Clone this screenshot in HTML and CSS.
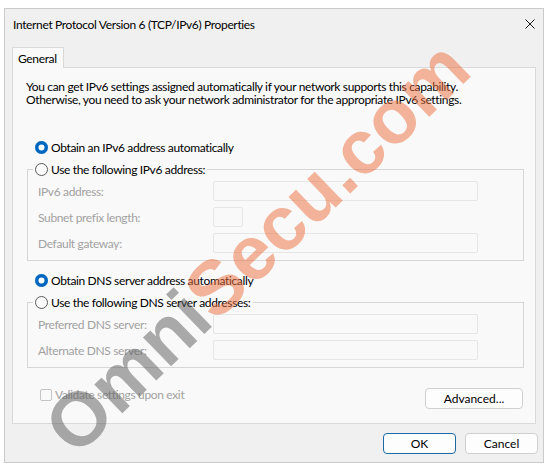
FILE: index.html
```html
<!DOCTYPE html>
<html lang="en">
<head>
  <meta charset="UTF-8"/>
  <title>Internet Protocol Version 6 (TCP/IPv6) Properties</title>
  <link rel="stylesheet" href="styles.css">
</head>
<body>
  <div class="dialog">
    <div class="titlebar">
      <span class="title">Internet Protocol Version 6 (TCP/IPv6) Properties</span>
      <button class="close" aria-label="Close">
        <svg width="10" height="10" viewBox="0 0 10 10"><path d="M0.5 0.5L9.5 9.5M9.5 0.5L0.5 9.5" stroke="#1a1a1a" stroke-width="1"/></svg>
      </button>
    </div>
    <div class="tabs"><span class="tab">General</span></div>

    <div class="panel">
      <p class="intro">You can get IPv6 settings assigned automatically if your network supports this capability.<br>Otherwise, you need to ask your network administrator for the appropriate IPv6 settings.</p>

      <!-- IPv6 address -->
      <label class="radio top"><input type="radio" name="ip" checked>Obtain an IPv6 address automatically</label>
      <fieldset class="group">
        <legend><label class="radio"><input type="radio" name="ip">Use the following IPv6 address:</label></legend>
        <div class="fields">
          <span>IPv6 address:</span><input class="wide" disabled>
          <span>Subnet prefix length:</span><input class="short" disabled>
          <span>Default gateway:</span><input class="wide" disabled>
        </div>
      </fieldset>

      <!-- DNS -->
      <label class="radio top dns"><input type="radio" name="dns" checked>Obtain DNS server address automatically</label>
      <fieldset class="group">
        <legend><label class="radio"><input type="radio" name="dns">Use the following DNS server addresses:</label></legend>
        <div class="fields">
          <span>Preferred DNS server:</span><input class="wide" disabled>
          <span>Alternate DNS server:</span><input class="wide" disabled>
        </div>
      </fieldset>

      <div class="footer">
        <label class="check"><input type="checkbox" disabled>Validate settings upon exit</label>
        <button class="btn adv">Advanced...</button>
      </div>
    </div>

    <div class="actions">
      <button class="btn ok">OK</button>
      <button class="btn">Cancel</button>
    </div>
  </div>

  <svg class="watermark" width="550" height="469" viewBox="0 0 550 469">
    <text x="76" y="458" transform="rotate(-44 76 458)"><tspan class="wm-grey">Omni</tspan><tspan class="wm-orange">Secu.com</tspan></text>
  </svg>
</body>
</html>
```
FILE: styles.css
```css
body{margin:0;background:#fff;font:12px "Segoe UI",Lato,sans-serif;letter-spacing:-0.35px;color:#000;}

.dialog{
  margin:8px 0 0 4px;width:538px;height:453px;
  border:1px solid #cbcbcb;background:#f0f0f0;
  display:flex;flex-direction:column;
}
.titlebar{height:30px;display:flex;align-items:center;justify-content:space-between;padding:0 8px 0 8px;}
.close{border:none;background:none;padding:0;width:10px;height:10px;display:flex;}

.tabs{padding:8px 0 0 7px;display:flex;}
.tab{
  box-sizing:border-box;width:52px;height:21px;padding:0 5px;
  display:flex;align-items:center;
  border:1px solid #d9d9d9;border-bottom:none;background:#f9f9f9;
  margin-bottom:-1px;position:relative;z-index:1;
}

.panel{
  box-sizing:border-box;height:357px;margin:0 7px;
  border:1px solid #d9d9d9;background:#f9f9f9;
  padding:12px 0 0 13px;
}
.intro{margin:0 0 30px;line-height:13px;white-space:nowrap;}

.radio{display:flex;align-items:center;height:22px;gap:3px;white-space:nowrap;}
.radio.top{margin-left:9px;}
.radio.dns{margin-top:8px;}
.radio input{
  appearance:none;margin:0;width:13px;height:13px;border-radius:50%;
  box-sizing:border-box;border:1px solid #5a5a5a;background:#fbfbfb;
}
.radio input:checked{border:none;background:#0067c0;box-shadow:inset 0 0 0 3.5px #0067c0,inset 0 0 0 7px #fff;}

.group{margin:0 11px 0 1px;padding:1px 0 7px 5px;border:1px solid #d6d6d6;min-width:0;}
.group legend{padding:0 2px;}
.fields{
  display:grid;grid-template-columns:175px 265px;row-gap:6px;align-items:center;
  margin-left:5px;color:#a2a2a2;
}
.fields input{
  box-sizing:border-box;height:20px;margin:0;
  border:1px solid #e6e6e6;border-radius:2px;background:#f9f9f9;
}
.fields .wide{width:265px;}
.fields .short{width:30px;}

.footer{display:flex;justify-content:space-between;align-items:flex-start;margin:20px 12px 0 14px;}
.check{display:flex;align-items:center;gap:3px;color:#a2a2a2;height:13px;}
.check input{
  appearance:none;margin:0;width:12px;height:12px;box-sizing:border-box;
  border:1px solid #c4c4c4;border-radius:2px;background:#f9f9f9;
}

.btn{
  box-sizing:border-box;height:21px;width:73px;padding:0;
  border:1px solid #d0d0d0;border-radius:4px;background:#fdfdfd;
  font:inherit;color:#000;
}
.btn.adv{width:98px;}
.btn.ok{border-color:#1a6aa8;}
.actions{display:flex;justify-content:flex-end;gap:9px;padding:9px 5px 0 0;}

.watermark{position:absolute;top:0;left:0;pointer-events:none;}
.watermark text{font:bold 76px "Liberation Sans",Arial,sans-serif;letter-spacing:0;}
.wm-grey{fill:rgba(90,90,90,.5);}
.wm-orange{fill:rgba(238,110,60,.5);}
```
